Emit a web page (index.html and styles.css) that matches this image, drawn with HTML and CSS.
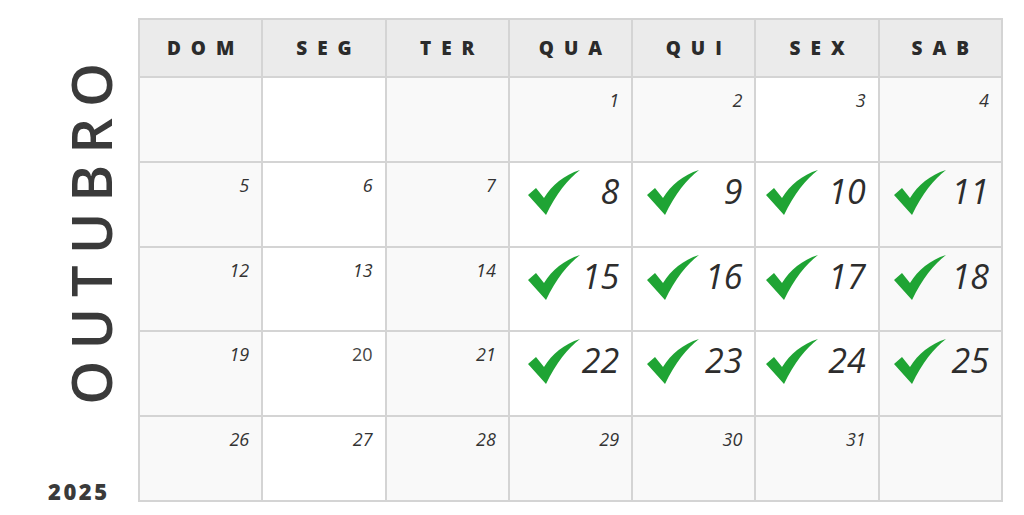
FILE: index.html
```html
<!DOCTYPE html>
<html lang="pt">
<head>
<meta charset="utf-8">
<title>Outubro 2025</title>
<link rel="stylesheet" href="styles.css">
</head>
<body>
<div class="page">
  <aside class="side">
    <h1 class="month">OUTUBRO</h1>
    <div class="year">2025</div>
  </aside>
  <main class="cal">
    <div class="hd">DOM</div>
    <div class="hd">SEG</div>
    <div class="hd">TER</div>
    <div class="hd">QUA</div>
    <div class="hd">QUI</div>
    <div class="hd">SEX</div>
    <div class="hd">SAB</div>

    <div class="day"></div>
    <div class="day w"></div>
    <div class="day"></div>
    <div class="day"><span class="n">1</span></div>
    <div class="day"><span class="n">2</span></div>
    <div class="day w"><span class="n">3</span></div>
    <div class="day"><span class="n">4</span></div>

    <div class="day"><span class="n">5</span></div>
    <div class="day w"><span class="n">6</span></div>
    <div class="day"><span class="n">7</span></div>
    <div class="day w done qua"><svg class="tick" viewBox="0 0 52 45"><path d="M0 25 L8 18 L16 28 C24 15 36 5 52 0 C40 9 28 24 18 45 Z"/></svg><span class="big">8</span></div>
    <div class="day w done"><svg class="tick" viewBox="0 0 52 45"><path d="M0 25 L8 18 L16 28 C24 15 36 5 52 0 C40 9 28 24 18 45 Z"/></svg><span class="big">9</span></div>
    <div class="day w done sex"><svg class="tick" viewBox="0 0 52 45"><path d="M0 25 L8 18 L16 28 C24 15 36 5 52 0 C40 9 28 24 18 45 Z"/></svg><span class="big">10</span></div>
    <div class="day done"><svg class="tick" viewBox="0 0 52 45"><path d="M0 25 L8 18 L16 28 C24 15 36 5 52 0 C40 9 28 24 18 45 Z"/></svg><span class="big">11</span></div>

    <div class="day"><span class="n">12</span></div>
    <div class="day w"><span class="n">13</span></div>
    <div class="day"><span class="n">14</span></div>
    <div class="day w done qua"><svg class="tick" viewBox="0 0 52 45"><path d="M0 25 L8 18 L16 28 C24 15 36 5 52 0 C40 9 28 24 18 45 Z"/></svg><span class="big">15</span></div>
    <div class="day w done"><svg class="tick" viewBox="0 0 52 45"><path d="M0 25 L8 18 L16 28 C24 15 36 5 52 0 C40 9 28 24 18 45 Z"/></svg><span class="big">16</span></div>
    <div class="day w done sex"><svg class="tick" viewBox="0 0 52 45"><path d="M0 25 L8 18 L16 28 C24 15 36 5 52 0 C40 9 28 24 18 45 Z"/></svg><span class="big">17</span></div>
    <div class="day done"><svg class="tick" viewBox="0 0 52 45"><path d="M0 25 L8 18 L16 28 C24 15 36 5 52 0 C40 9 28 24 18 45 Z"/></svg><span class="big">18</span></div>

    <div class="day"><span class="n">19</span></div>
    <div class="day w"><span class="n up">20</span></div>
    <div class="day"><span class="n">21</span></div>
    <div class="day w done qua"><svg class="tick" viewBox="0 0 52 45"><path d="M0 25 L8 18 L16 28 C24 15 36 5 52 0 C40 9 28 24 18 45 Z"/></svg><span class="big">22</span></div>
    <div class="day w done"><svg class="tick" viewBox="0 0 52 45"><path d="M0 25 L8 18 L16 28 C24 15 36 5 52 0 C40 9 28 24 18 45 Z"/></svg><span class="big">23</span></div>
    <div class="day w done sex"><svg class="tick" viewBox="0 0 52 45"><path d="M0 25 L8 18 L16 28 C24 15 36 5 52 0 C40 9 28 24 18 45 Z"/></svg><span class="big">24</span></div>
    <div class="day done"><svg class="tick" viewBox="0 0 52 45"><path d="M0 25 L8 18 L16 28 C24 15 36 5 52 0 C40 9 28 24 18 45 Z"/></svg><span class="big">25</span></div>

    <div class="day"><span class="n">26</span></div>
    <div class="day w"><span class="n">27</span></div>
    <div class="day"><span class="n">28</span></div>
    <div class="day"><span class="n">29</span></div>
    <div class="day"><span class="n">30</span></div>
    <div class="day"><span class="n">31</span></div>
    <div class="day"></div>
  </main>
</div>
</body>
</html>
```

FILE: styles.css
```css
* { box-sizing: border-box; }
html, body { margin: 0; padding: 0; background: #ffffff; }
body { font-family: "Open Sans", "DejaVu Sans", sans-serif; color: #333333; }

.page {
  display: flex;
  width: 1024px;
  height: 515px;
}

.side {
  width: 138px;
  display: flex;
  flex-direction: column;
  align-items: flex-start;
}

.month {
  margin: 52px 0 0 62px;
  padding: 0;
  writing-mode: vertical-rl;
  transform: rotate(180deg);
  font-size: 56px;
  font-weight: 600;
  line-height: 1;
  letter-spacing: 11px;
  color: #3a3a3a;
}

.year {
  margin-top: auto;
  margin-bottom: 13px;
  margin-left: 48px;
  font-size: 22px;
  font-weight: 800;
  letter-spacing: 2.5px;
  color: #3a3a3a;
  line-height: 1;
}

.cal {
  margin-top: 18px;
  width: 865px;
  height: 484px;
  display: grid;
  grid-template-columns: repeat(7, 1fr);
  grid-template-rows: 56px repeat(5, 1fr);
  gap: 2px;
  padding: 2px;
  background: #d4d4d4;
}

.hd {
  background: #ebebeb;
  display: flex;
  align-items: center;
  justify-content: center;
  padding-left: 10px;
  font-weight: 800;
  font-size: 19px;
  letter-spacing: 10px;
  color: #2b2b2b;
}

.day {
  background: #f9f9f9;
  display: flex;
  justify-content: flex-end;
  align-items: flex-start;
  padding: 10px 12px 0 14px;
}
.day.w { background: #ffffff; }

.n {
  font-style: italic;
  font-weight: 500;
  font-size: 18px;
  color: #333333;
}
.n.up { font-style: normal; font-weight: 400; color: #444444; }

.done {
  justify-content: space-between;
  align-items: flex-start;
  padding-top: 5px;
}
.done.qua { padding-left: 18px; }
.done.sex { padding-left: 10px; }

.tick {
  width: 52px;
  height: 45px;
  fill: #1fa434;
  flex: none;
  margin-top: 2px;
}

.big {
  font-style: italic;
  font-weight: 500;
  font-size: 34px;
  line-height: 46px;
  color: #2d2d2d;
}
```
